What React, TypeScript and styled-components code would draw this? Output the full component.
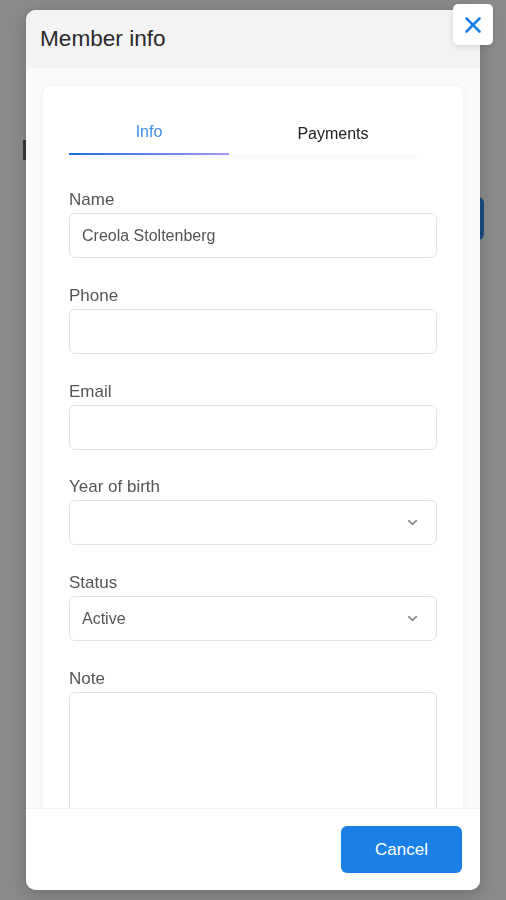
import React, { useState } from 'react';
import styled, { createGlobalStyle } from 'styled-components';
import { X, ChevronDown } from 'lucide-react';

const GlobalStyle = createGlobalStyle`
  * { box-sizing: border-box; }
  body {
    margin: 0;
    font-family: "Liberation Sans", Arial, sans-serif;
    background: #ffffff;
  }
`;

// the page that sits behind the dimmed backdrop
const Page = styled.div`
  min-height: 900px;
  padding: 140px 22px 0 23px;
  display: flex;
  flex-direction: column;
  background: #ffffff;
`;

const PageHeading = styled.div`
  height: 20px;
  border-left: 3px solid #555;
`;

const PageActions = styled.div`
  margin-top: 37px;
  display: flex;
  justify-content: flex-end;
`;

const PageButton = styled.div`
  width: 90px;
  height: 43px;
  border-radius: 6px;
  background: #1a80e5;
`;

const Backdrop = styled.div`
  position: fixed;
  inset: 0;
  background: rgba(26, 30, 34, 0.52);
`;

const Modal = styled.div`
  position: fixed;
  left: 26px;
  top: 10px;
  width: 454px;
  height: 880px;
  border-radius: 10px;
  background: #f9f9f9;
  overflow: hidden;
  display: flex;
  flex-direction: column;
  box-shadow: 0 4px 16px rgba(0, 0, 0, 0.2);
`;

const CloseButton = styled.button`
  position: fixed;
  left: 453px;
  top: 4px;
  width: 40px;
  height: 41px;
  border: none;
  border-radius: 5px;
  background: #ffffff;
  color: #1a7fe0;
  display: flex;
  align-items: center;
  justify-content: center;
  padding: 0;
  cursor: pointer;
  box-shadow: 0 2px 6px rgba(0, 0, 0, 0.12);
`;

const Header = styled.div`
  height: 58px;
  flex-shrink: 0;
  display: flex;
  align-items: center;
  padding: 0 14px;
  background: #f4f4f4;
`;

const Title = styled.h2`
  margin: 0;
  font-size: 22.6px;
  font-weight: 400;
  color: #2a2a2a;
`;

const Body = styled.div`
  flex: 1;
  overflow: hidden;
  padding: 18px 17px 0 17px;
  background: #fafafa;
`;

const Card = styled.div`
  background: #ffffff;
  border-radius: 8px;
  padding: 21px 26px 0 26px;
  min-height: 800px;
  box-shadow: 0 0 6px rgba(0, 0, 0, 0.06);
`;

const TabList = styled.div`
  display: flex;
  gap: 24px;
  width: 351px;
  box-shadow: 0 5px 6px -3px rgba(0, 0, 0, 0.05);
`;

const Tab = styled.button<{ $active?: boolean }>`
  width: 160px;
  height: 48px;
  border: none;
  background: transparent;
  font-family: inherit;
  font-size: 16px;
  padding: ${(p) => (p.$active ? '4px' : '8px')} 0 0;
  color: ${(p) => (p.$active ? '#3d8fe8' : '#222')};
  border-bottom: 2px solid transparent;
  border-image: ${(p) =>
    p.$active ? 'linear-gradient(90deg, #1a6fd6, #a699f2) 1' : 'none'};
  cursor: pointer;
`;

const Form = styled.div`
  margin-top: 36px;
  display: flex;
  flex-direction: column;
  gap: 28.75px;
`;

const Field = styled.label`
  display: flex;
  flex-direction: column;
`;

const Label = styled.span`
  font-size: 17px;
  line-height: 18px;
  color: #555;
  margin-bottom: 4px;
`;

const Input = styled.input`
  height: 45px;
  border: 1px solid #e2e2e2;
  border-radius: 6px;
  padding: 0 12px;
  font-family: inherit;
  font-size: 16px;
  color: #555;
  outline: none;
`;

const SelectBox = styled.div`
  height: 45px;
  border: 1px solid #e2e2e2;
  border-radius: 6px;
  padding: 0 16px 0 12px;
  display: flex;
  align-items: center;
  justify-content: space-between;
  font-size: 16px;
  color: #555;
`;

const TextArea = styled.textarea`
  height: 160px;
  border: 1px solid #e2e2e2;
  border-radius: 6px;
  resize: none;
  font-family: inherit;
  outline: none;
`;

const Footer = styled.div`
  height: 82px;
  flex-shrink: 0;
  display: flex;
  align-items: center;
  justify-content: flex-end;
  padding-right: 18px;
  background: #ffffff;
  border-top: 1px solid #f1f1f1;
`;

const PrimaryButton = styled.button`
  width: 121px;
  height: 47px;
  border: none;
  border-radius: 6px;
  background: #1a80e5;
  color: #ffffff;
  font-family: inherit;
  font-size: 17px;
  cursor: pointer;
`;

const Select = ({ value }: { value?: string }) => (
  <SelectBox>
    <span>{value}</span>
    <ChevronDown size={15} strokeWidth={2.6} color="#8a8a8a" />
  </SelectBox>
);

const App = () => {
  const [tab, setTab] = useState('info');
  const [name, setName] = useState('Creola Stoltenberg');

  return (
    <>
      <GlobalStyle />
      <Page>
        <PageHeading />
        <PageActions>
          <PageButton />
        </PageActions>
      </Page>
      <Backdrop />
      <Modal>
        <Header>
          <Title>Member info</Title>
        </Header>
        <Body>
          <Card>
            <TabList>
              <Tab $active={tab === 'info'} onClick={() => setTab('info')}>
                Info
              </Tab>
              <Tab $active={tab === 'payments'} onClick={() => setTab('payments')}>
                Payments
              </Tab>
            </TabList>
            <Form>
              <Field>
                <Label>Name</Label>
                <Input value={name} onChange={(e) => setName(e.target.value)} />
              </Field>
              <Field>
                <Label>Phone</Label>
                <Input />
              </Field>
              <Field>
                <Label>Email</Label>
                <Input />
              </Field>
              <Field>
                <Label>Year of birth</Label>
                <Select />
              </Field>
              <Field>
                <Label>Status</Label>
                <Select value="Active" />
              </Field>
              <Field>
                <Label>Note</Label>
                <TextArea />
              </Field>
            </Form>
          </Card>
        </Body>
        <Footer>
          <PrimaryButton>Cancel</PrimaryButton>
        </Footer>
      </Modal>
      <CloseButton>
        <X size={26} strokeWidth={2.4} />
      </CloseButton>
    </>
  );
};

export default App;
